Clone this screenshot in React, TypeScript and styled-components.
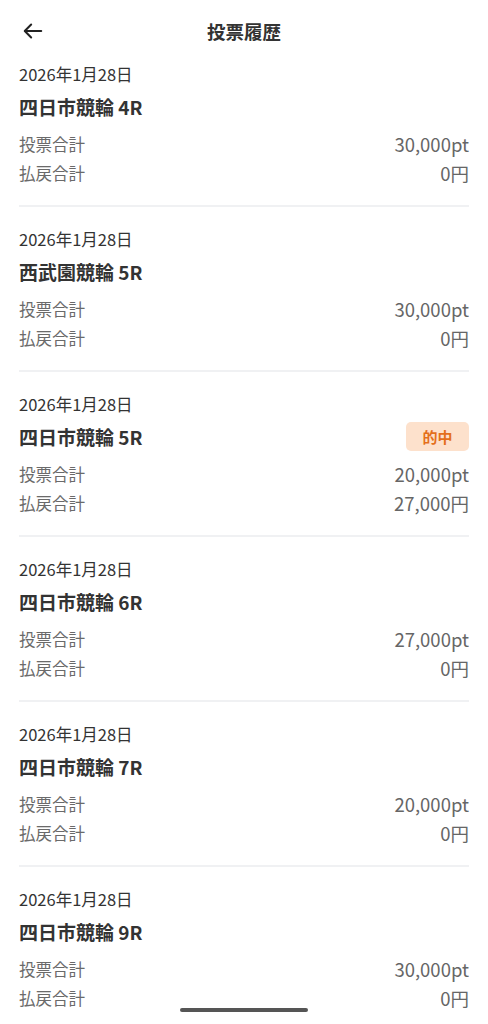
import React from 'react'
import styled, { createGlobalStyle } from 'styled-components'

const GlobalStyle = createGlobalStyle`
  html, body {
    margin: 0;
    padding: 0;
    background: #ffffff;
  }
  body {
    font-family: 'Noto Sans CJK JP', 'Noto Sans', sans-serif;
    color: #333333;
  }
`

const Screen = styled.div`
  width: 488px;
  height: 1024px;
  overflow: hidden;
  position: relative;
  background: #ffffff;
`

const Header = styled.header`
  height: 61px;
  display: grid;
  grid-template-columns: 60px 1fr 60px;
  align-items: center;
`

const BackButton = styled.button`
  border: none;
  background: none;
  padding: 0 0 0 22px;
  height: 40px;
  display: flex;
  align-items: center;
  color: #222;
  cursor: pointer;
`

const Title = styled.h1`
  margin: 0;
  text-align: center;
  font-size: 18.5px;
  font-weight: 700;
  color: #333;
`

const List = styled.ul`
  list-style: none;
  margin: 0;
  padding: 2px 19px 0 19px;
`

const Item = styled.li`
  padding: 0 0 17px;
  margin-bottom: 21px;
  border-bottom: 2px solid #f0f1f3;
`

const DateText = styled.div`
  font-size: 16.5px;
  line-height: 22px;
  color: #333;
`

const NameRow = styled.div`
  display: flex;
  justify-content: space-between;
  align-items: center;
  height: 42px;
`

const RaceName = styled.div`
  font-size: 19px;
  font-weight: 700;
  color: #333;
`

const Badge = styled.span`
  display: inline-flex;
  align-items: center;
  justify-content: center;
  width: 63px;
  height: 29px;
  border-radius: 5px;
  background: #fde1cc;
  color: #e46f1b;
  font-size: 15px;
  font-weight: 700;
`

const Rows = styled.dl`
  margin: 3px 0 0;
  display: grid;
  grid-template-columns: 1fr auto;
`

const Label = styled.dt`
  font-size: 16.5px;
  line-height: 29px;
  color: #6a6a6a;
`

const Value = styled.dd`
  margin: 0;
  text-align: right;
  font-size: 18.5px;
  line-height: 29px;
  color: #666;
`

const HomeIndicator = styled.div`
  position: absolute;
  left: 180px;
  bottom: 12px;
  width: 128px;
  height: 4px;
  border-radius: 2px;
  background: #555;
`

type Race = {
  name: string
  bet: string
  payout: string
  hit?: boolean
}

const races: Race[] = [
  { name: '四日市競輪 4R', bet: '30,000pt', payout: '0円' },
  { name: '西武園競輪 5R', bet: '30,000pt', payout: '0円' },
  { name: '四日市競輪 5R', bet: '20,000pt', payout: '27,000円', hit: true },
  { name: '四日市競輪 6R', bet: '27,000pt', payout: '0円' },
  { name: '四日市競輪 7R', bet: '20,000pt', payout: '0円' },
  { name: '四日市競輪 9R', bet: '30,000pt', payout: '0円' },
]

export default function App() {
  return (
    <Screen>
      <GlobalStyle />
      <Header>
        <BackButton aria-label="戻る">
          <svg width="22" height="22" viewBox="0 0 24 24" fill="none" stroke="currentColor" strokeWidth="2.2" strokeLinecap="round" strokeLinejoin="round">
            <path d="M21 12H3.5" />
            <path d="M10 5l-7 7 7 7" />
          </svg>
        </BackButton>
        <Title>投票履歴</Title>
        <span />
      </Header>
      <List>
        {races.map((r, i) => (
          <Item key={i}>
            <DateText>2026年1月28日</DateText>
            <NameRow>
              <RaceName>{r.name}</RaceName>
              {r.hit && <Badge>的中</Badge>}
            </NameRow>
            <Rows>
              <Label>投票合計</Label>
              <Value>{r.bet}</Value>
              <Label>払戻合計</Label>
              <Value>{r.payout}</Value>
            </Rows>
          </Item>
        ))}
      </List>
      <HomeIndicator />
    </Screen>
  )
}
